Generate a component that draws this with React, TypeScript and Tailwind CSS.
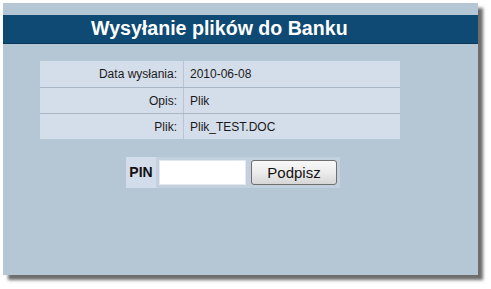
import React, { useState } from 'react';

const rows = [
  { label: 'Data wysłania:', value: '2010-06-08' },
  { label: 'Opis:', value: 'Plik' },
  { label: 'Plik:', value: 'Plik_TEST.DOC' },
];

const App: React.FC = () => {
  const [pin, setPin] = useState<string>('');

  return (
    <div className="w-[491px] h-[289px] bg-white pt-[3px] pl-[3px] font-['Liberation_Sans',Arial,sans-serif]">
      <div className="w-[475px] h-[272px] bg-[#b5c6d5] pt-[12px] shadow-[5px_5px_3px_rgba(60,60,60,0.75)]">
        {/* Header */}
        <div className="h-[29px] bg-[#0e4a74] border-b border-[#0a3658] flex items-center pl-[88px]">
          <h1 className="text-[19.6px] leading-none font-bold text-white">
            Wysyłanie plików do Banku
          </h1>
        </div>

        {/* Details table */}
        <div className="ml-[37px] mt-[17px] w-[360px] bg-[#d4ddea]">
          {rows.map((row, i) => (
            <div
              key={row.label}
              className={`flex h-[26px] text-[12px] text-[#1a1a1a] ${i > 0 ? 'border-t border-[#a8b5c5]' : ''}`}
            >
              <div className="w-[144px] flex items-center justify-end pr-[6px] border-r border-[#b8c4d2]">
                {row.label}
              </div>
              <div className="flex-1 flex items-center pl-[6px]">{row.value}</div>
            </div>
          ))}
        </div>

        {/* PIN */}
        <div className="ml-[123px] mt-[18px] flex items-center w-[214px] h-[31px] bg-[#c3d0de]">
          <div className="w-[30px] h-full bg-[#d3dcea] flex items-center justify-center text-[14px] font-bold text-[#111]">
            PIN
          </div>
          <div className="ml-[3px] h-full flex items-center">
            <input
              type="password"
              value={pin}
              onChange={(e) => setPin(e.target.value)}
              className="w-[87px] h-[25px] bg-white border border-[#e4e9f0] outline-none text-[13px] px-1"
            />
          </div>
          <button className="ml-[5px] w-[86px] h-[25px] rounded-[3px] border border-[#6f6f6f] bg-gradient-to-b from-[#f8f8f8] via-[#ececec] to-[#d6d6d6] text-[15px] text-[#111] leading-none">
            Podpisz
          </button>
        </div>
      </div>
    </div>
  );
};

export default App;
